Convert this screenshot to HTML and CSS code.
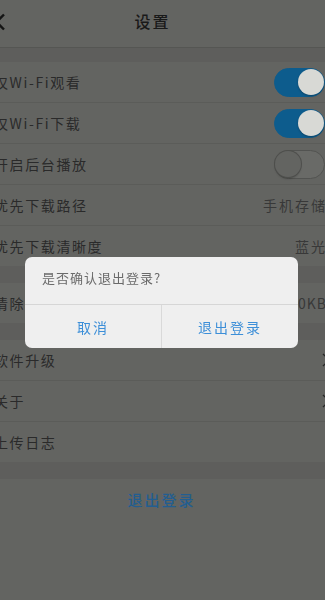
FILE: index.html
```html
<!DOCTYPE html>
<html lang="zh-CN">
<head>
    <meta charset="UTF-8">
    <meta name="viewport" content="width=device-width, initial-scale=1.0">
    <title>设置</title>
    <link rel="stylesheet" href="styles.css">
</head>
<body>
    <div class="screen">
        <header class="navbar">
            <span class="back">
                <svg width="12" height="18" viewBox="0 0 12 18"><path d="M10 1.5 L2.5 9 L10 16.5" fill="none" stroke="#161616" stroke-width="2.4"/></svg>
            </span>
            <h1 class="title">设置</h1>
        </header>

        <div class="gap first"></div>
        <section class="group">
            <div class="row"><span class="label">仅Wi-Fi观看</span><span class="switch on"></span></div>
            <div class="row"><span class="label">仅Wi-Fi下载</span><span class="switch on"></span></div>
            <div class="row"><span class="label">开启后台播放</span><span class="switch"></span></div>
            <div class="row"><span class="label">优先下载路径</span><span class="value">手机存储</span></div>
            <div class="row"><span class="label">优先下载清晰度</span><span class="value">蓝光</span></div>
        </section>

        <div class="gap"></div>
        <section class="group">
            <div class="row"><span class="label">清除缓存</span><span class="value latin">0KB</span></div>
        </section>

        <div class="gap"></div>
        <section class="group">
            <div class="row"><span class="label">软件升级</span><span class="arrow"><svg width="9" height="14" viewBox="0 0 9 14"><path d="M1 1 L7.5 7 L1 13" fill="none" stroke="#2a2a2a" stroke-width="1.4"/></svg></span></div>
            <div class="row"><span class="label">关于</span><span class="arrow"><svg width="9" height="14" viewBox="0 0 9 14"><path d="M1 1 L7.5 7 L1 13" fill="none" stroke="#2a2a2a" stroke-width="1.4"/></svg></span></div>
            <div class="row"><span class="label">上传日志</span></div>
        </section>

        <div class="gap"></div>
        <div class="logout">退出登录</div>
    </div>

    <!-- confirm dialog -->
    <div class="mask"></div>
    <div class="dialog">
        <div class="dialog-msg">是否确认退出登录?</div>
        <div class="dialog-actions">
            <span class="dialog-btn">取消</span>
            <span class="dialog-btn">退出登录</span>
        </div>
    </div>
</body>
</html>
```

FILE: styles.css
```css
html, body {
    margin: 0;
    padding: 0;
}
body {
    width: 325px;
    height: 600px;
    overflow: hidden;
    background-color: #6c6d6a;
    font-family: "Noto Sans CJK SC", "Noto Sans", sans-serif;
    color: #2e2e2e;
}
.screen {
    width: 365px;
    margin-left: -21px;
}
.navbar {
    height: 47px;
    display: flex;
    align-items: center;
    border-bottom: 1px solid #5d5e5b;
    background-color: #6c6d6a;
}
.back {
    width: 60px;
    padding-left: 15px;
    display: flex;
    align-items: center;
    margin-top: -4px;
}
.title {
    flex: 1;
    margin: -5px 93px 0 0;
    text-align: center;
    font-size: 16px;
    font-weight: 500;
    letter-spacing: 2px;
    color: #1c1c1c;
}
.gap {
    height: 17px;
    background-color: #666764;
}
.gap.first {
    height: 14px;
}
.group {
    background-color: #6c6d6a;
}
.row {
    height: 40px;
    padding: 0 19px 0 15px;
    display: flex;
    align-items: center;
    justify-content: space-between;
    border-bottom: 1px solid #636461;
}
.row:last-child {
    border-bottom: none;
}
.label {
    font-size: 14px;
    letter-spacing: 1.6px;
    color: #2e2e2e;
}
.value {
    font-size: 14px;
    letter-spacing: 2px;
    margin-right: -2px;
    color: #3d3d3d;
}
.value.latin {
    letter-spacing: 1px;
}
.arrow {
    display: flex;
    margin-right: -6px;
}
.switch {
    position: relative;
    width: 51px;
    height: 29px;
    border-radius: 15px;
    box-sizing: border-box;
    border: 1.5px solid #5a5b58;
    background-color: #727370;
}
.switch::after {
    content: "";
    position: absolute;
    top: 0;
    left: 0;
    width: 26px;
    height: 26px;
    border-radius: 50%;
    background-color: #6c6d6a;
    box-shadow: 0 0 0 1px #555653, 0 2px 2px rgba(0,0,0,0.2);
}
.switch.on {
    border-color: #0f6499;
    background-color: #0f6499;
}
.switch.on::after {
    left: auto;
    right: 0;
    background-color: #ebece8;
    box-shadow: 0 1px 2px rgba(0,0,0,0.25);
}
.logout {
    height: 41px;
    display: flex;
    align-items: center;
    justify-content: center;
    font-size: 15px;
    font-weight: 500;
    letter-spacing: 2px;
    color: #27679d;
    background-color: #6c6d6a;
}
.mask {
    position: fixed;
    top: 0;
    left: 0;
    right: 0;
    bottom: 0;
    background-color: rgba(0,0,0,0.08);
}
.dialog {
    position: fixed;
    top: 257px;
    left: 25px;
    width: 273px;
    border-radius: 7px;
    background-color: #efefef;
    overflow: hidden;
}
.dialog-msg {
    height: 41px;
    padding: 0 0 6px 17px;
    display: flex;
    align-items: center;
    font-size: 13px;
    letter-spacing: 1px;
    color: #6a6a6a;
    border-bottom: 1px solid #d6d6d6;
}
.dialog-actions {
    display: flex;
    height: 43px;
}
.dialog-btn {
    flex: 1;
    display: flex;
    align-items: center;
    justify-content: center;
    font-size: 14px;
    letter-spacing: 2px;
    color: #3d8fd8;
}
.dialog-btn + .dialog-btn {
    border-left: 1px solid #d9d9d9;
}
```
